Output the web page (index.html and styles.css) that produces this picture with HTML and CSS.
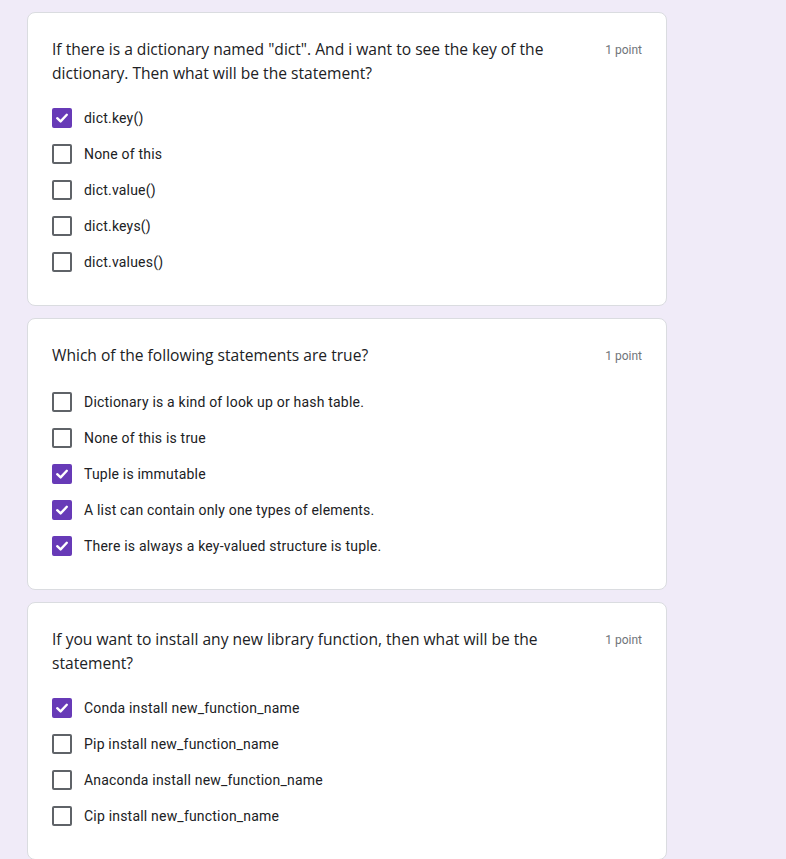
FILE: index.html
```html
<!DOCTYPE html>
<html>
<head>
<meta charset="utf-8">
<link rel="stylesheet" href="styles.css">
</head>
<body>
<main class="page">
  <section class="card">
    <div class="head">
      <div class="title">If there is a dictionary named "dict". And i want to see the key of the dictionary. Then what will be the statement?</div>
      <div class="points">1 point</div>
    </div>
    <ul class="options">
      <li class="opt"><span class="box checked"><svg viewBox="0 0 18 18" width="18" height="18"><path d="M4.2 9.2 L7.6 12.4 L13.8 5.8" fill="none" stroke="#fff" stroke-width="2.4" stroke-linecap="round" stroke-linejoin="round"/></svg></span><span class="label">dict.key()</span></li>
      <li class="opt"><span class="box"></span><span class="label">None of this</span></li>
      <li class="opt"><span class="box"></span><span class="label">dict.value()</span></li>
      <li class="opt"><span class="box"></span><span class="label">dict.keys()</span></li>
      <li class="opt"><span class="box"></span><span class="label">dict.values()</span></li>
    </ul>
  </section>

  <section class="card">
    <div class="head">
      <div class="title">Which of the following statements are true?</div>
      <div class="points">1 point</div>
    </div>
    <ul class="options">
      <li class="opt"><span class="box"></span><span class="label">Dictionary is a kind of look up or hash table.</span></li>
      <li class="opt"><span class="box"></span><span class="label">None of this is true</span></li>
      <li class="opt"><span class="box checked"><svg viewBox="0 0 18 18" width="18" height="18"><path d="M4.2 9.2 L7.6 12.4 L13.8 5.8" fill="none" stroke="#fff" stroke-width="2.4" stroke-linecap="round" stroke-linejoin="round"/></svg></span><span class="label">Tuple is immutable</span></li>
      <li class="opt"><span class="box checked"><svg viewBox="0 0 18 18" width="18" height="18"><path d="M4.2 9.2 L7.6 12.4 L13.8 5.8" fill="none" stroke="#fff" stroke-width="2.4" stroke-linecap="round" stroke-linejoin="round"/></svg></span><span class="label">A list can contain only one types of elements.</span></li>
      <li class="opt"><span class="box checked"><svg viewBox="0 0 18 18" width="18" height="18"><path d="M4.2 9.2 L7.6 12.4 L13.8 5.8" fill="none" stroke="#fff" stroke-width="2.4" stroke-linecap="round" stroke-linejoin="round"/></svg></span><span class="label">There is always a key-valued structure is tuple.</span></li>
    </ul>
  </section>

  <section class="card">
    <div class="head">
      <div class="title">If you want to install any new library function, then what will be the statement?</div>
      <div class="points">1 point</div>
    </div>
    <ul class="options">
      <li class="opt"><span class="box checked"><svg viewBox="0 0 18 18" width="18" height="18"><path d="M4.2 9.2 L7.6 12.4 L13.8 5.8" fill="none" stroke="#fff" stroke-width="2.4" stroke-linecap="round" stroke-linejoin="round"/></svg></span><span class="label">Conda install new_function_name</span></li>
      <li class="opt"><span class="box"></span><span class="label">Pip install new_function_name</span></li>
      <li class="opt"><span class="box"></span><span class="label">Anaconda install new_function_name</span></li>
      <li class="opt"><span class="box"></span><span class="label">Cip install new_function_name</span></li>
    </ul>
  </section>
</main>
</body>
</html>
```
FILE: styles.css
```css
* { box-sizing: border-box; }
html, body {
  margin: 0;
  padding: 0;
  background: #f0ebf8;
}
body {
  font-family: Roboto, "Liberation Sans", sans-serif;
  color: #202124;
}
.page {
  padding: 12px 0 0 27px;
  display: flex;
  flex-direction: column;
  gap: 12px;
}
.card {
  width: 640px;
  background: #fff;
  border: 1px solid #dadce0;
  border-radius: 8px;
  padding: 24px 24px 25px;
}
.head {
  display: flex;
  align-items: flex-start;
  min-height: 26px;
}
.title {
  flex: 1;
  font-family: "Open Sans", Roboto, sans-serif;
  font-size: 15.6px;
  line-height: 24px;
  color: #202124;
  padding-right: 48px;
  letter-spacing: 0;
}
.points {
  font-size: 12px;
  line-height: 24px;
  color: #70757a;
  white-space: nowrap;
  padding-top: 1px;
}
.options {
  list-style: none;
  margin: 15px 0 0;
  padding: 0;
}
.opt {
  display: flex;
  align-items: center;
  height: 36px;
}
.box {
  width: 20px;
  height: 20px;
  border: 2px solid #5f6368;
  border-radius: 2px;
  flex: none;
  display: flex;
  align-items: center;
  justify-content: center;
}
.box.checked {
  background: #673ab7;
  border-color: #673ab7;
}
.box svg { flex: none; }
.label {
  margin-left: 12px;
  font-size: 14px;
  letter-spacing: 0.2px;
  color: #202124;
}
```
